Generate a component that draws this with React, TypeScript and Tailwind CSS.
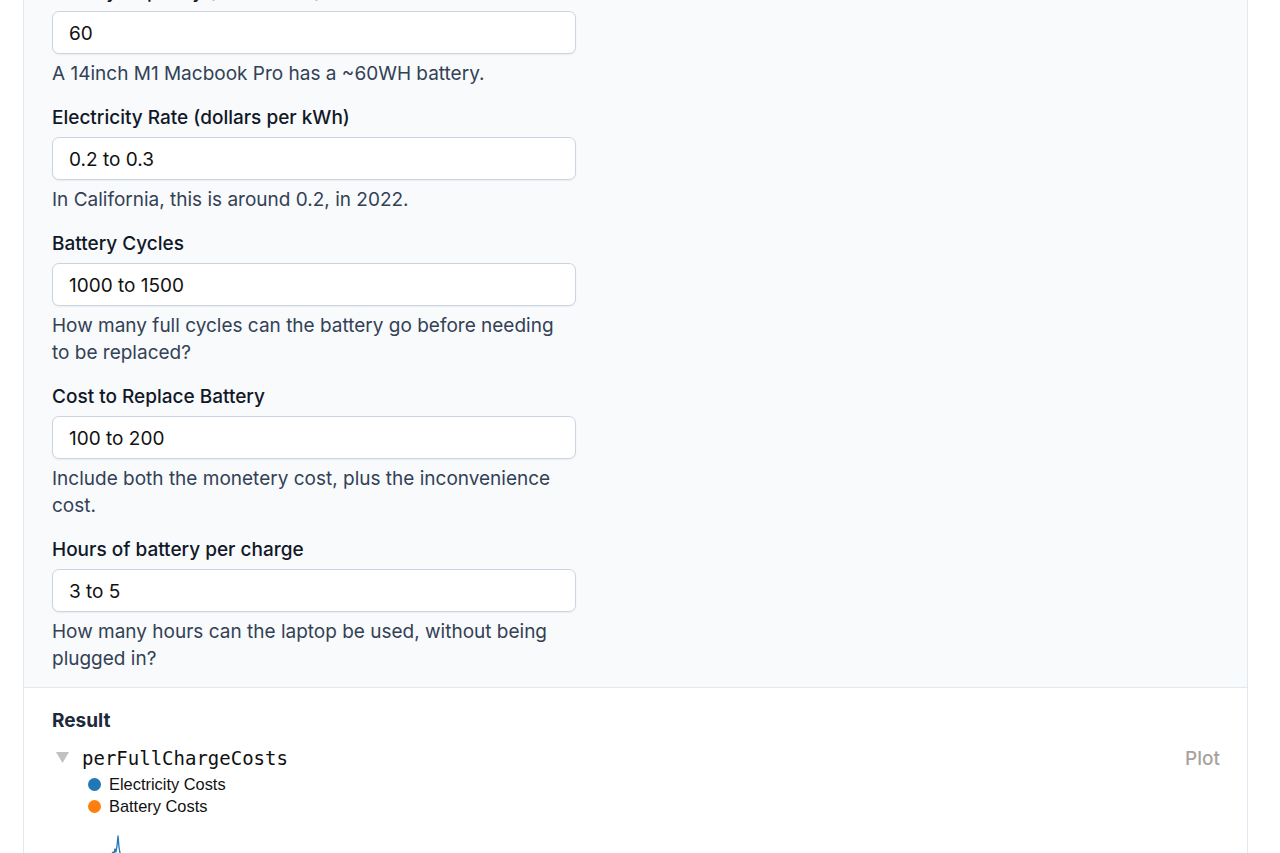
import React from "react";

type Field = {
  label: string;
  value: string;
  help: string;
};

const fields: Field[] = [
  {
    label: "Battery Capacity (watt-hours)",
    value: "60",
    help: "A 14inch M1 Macbook Pro has a ~60WH battery.",
  },
  {
    label: "Electricity Rate (dollars per kWh)",
    value: "0.2 to 0.3",
    help: "In California, this is around 0.2, in 2022.",
  },
  {
    label: "Battery Cycles",
    value: "1000 to 1500",
    help: "How many full cycles can the battery go before needing to be replaced?",
  },
  {
    label: "Cost to Replace Battery",
    value: "100 to 200",
    help: "Include both the monetery cost, plus the inconvenience cost.",
  },
  {
    label: "Hours of battery per charge",
    value: "3 to 5",
    help: "How many hours can the laptop be used, without being plugged in?",
  },
];

function InputField({ field }: { field: Field }) {
  return (
    <div className="flex flex-col">
      <label className="text-[19px] leading-[27px] font-medium text-[#111827]">
        {field.label}
      </label>
      <div className="mt-[6px] w-[524px] h-[43px] flex items-center px-4 pt-[4px] bg-white border border-[#cbd5e1] rounded-[7px] shadow-[0_1px_2px_rgba(15,23,42,0.06)] text-[19px] text-[#111111]">
        {field.value}
      </div>
      <p className="mt-[6px] w-[524px] text-[19px] leading-[27px] text-[#334155]">
        {field.help}
      </p>
    </div>
  );
}

function Spike() {
  return (
    <svg width="40" height="24" viewBox="0 0 40 24" className="block">
      <path
        d="M0 23 L4 22 L6 19 L7 21 L8 16 L9 19 L10 13 L11 3 L12 14 L13 20 L14 23"
        fill="none"
        stroke="#1f77b4"
        strokeWidth="1.3"
        strokeLinejoin="round"
      />
    </svg>
  );
}

export default function App() {
  return (
    <div className="w-[1280px] h-[853px] overflow-hidden bg-white font-['Inter','Liberation_Sans',sans-serif]">
      <div className="ml-[23px] w-[1225px] border-x border-[#e2e8f0] -mt-[38px]">
        <div className="bg-[#f8fafc] border-b border-[#e2e8f0] pl-[28px] pt-4 pb-[15px] flex flex-col gap-[17px]">
          {fields.map((f) => (
            <InputField key={f.label} field={f} />
          ))}
        </div>
        <div className="bg-white pl-[28px] pr-[27px] pt-[19px] pb-10">
          <h3 className="text-[19px] leading-[27px] font-bold text-[#1e293b]">
            Result
          </h3>
          <div className="mt-[8px] flex items-center justify-between">
            <div className="flex items-center">
              <svg width="13" height="11" viewBox="0 0 13 11" className="ml-[4px] mr-[13px]">
                <polygon points="0,0 13,0 6.5,11" fill="#c4c0bd" />
              </svg>
              <span className="font-['DejaVu_Sans_Mono',monospace] text-[19px] leading-[24px] text-[#111111]">
                perFullChargeCosts
              </span>
            </div>
            <span className="text-[19px] text-[#a8a29e] font-medium mt-[3px]">Plot</span>
          </div>
          <div className="ml-[36px] mt-0 font-['Liberation_Sans',Arial,sans-serif] text-[16.4px] text-[#111111]">
            <div className="flex items-center h-[22px]">
              <span className="w-[13px] h-[13px] rounded-full bg-[#1f77b4] mr-[8px]" />
              Electricity Costs
            </div>
            <div className="flex items-center h-[22px]">
              <span className="w-[13px] h-[13px] rounded-full bg-[#ff7f0e] mr-[8px]" />
              Battery Costs
            </div>
          </div>
          <div className="ml-[55px] mt-[15px]">
            <Spike />
          </div>
        </div>
      </div>
    </div>
  );
}
